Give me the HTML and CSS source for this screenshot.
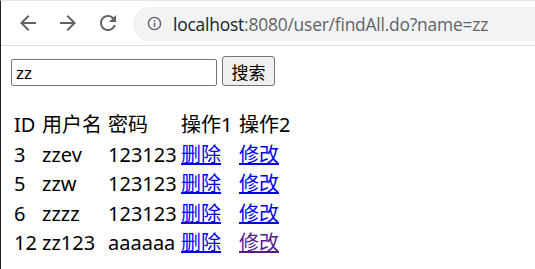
FILE: index.html
```html
<!DOCTYPE html>
<html lang="zh-CN">
<head>
  <meta charset="UTF-8">
  <link rel="stylesheet" href="styles.css">
  <title>用户列表</title>
</head>
<body>
  <div class="window">
    <div class="toolbar">
      <div class="nav-buttons">
        <svg class="nav-icon" viewBox="0 0 24 24"><path d="M20 11H7.83l5.59-5.59L12 4l-8 8 8 8 1.41-1.41L7.83 13H20v-2z"/></svg>
        <svg class="nav-icon" viewBox="0 0 24 24"><path d="M12 4l-1.41 1.41L16.17 11H4v2h12.17l-5.58 5.59L12 20l8-8z"/></svg>
        <svg class="nav-icon" viewBox="0 0 24 24"><path d="M17.65 6.35A7.958 7.958 0 0 0 12 4c-4.42 0-7.990 3.58-7.99 8s3.570 8 7.99 8c3.73 0 6.84-2.55 7.73-6h-2.08A5.99 5.99 0 0 1 12 18c-3.31 0-6-2.690-6-6s2.69-6 6-6c1.66 0 3.14.69 4.22 1.78L13 11h7V4l-2.35 2.35z"/></svg>
      </div>
      <div class="omnibox">
        <svg class="info-icon" viewBox="0 0 16 16">
          <circle cx="8" cy="8" r="6.5" fill="none" stroke="#5f6368" stroke-width="1.5"/>
          <rect x="7.2" y="7" width="1.6" height="4.5" fill="#5f6368"/>
          <rect x="7.2" y="4.3" width="1.6" height="1.6" fill="#5f6368"/>
        </svg>
        <span class="url"><span class="host">localhost</span>:8080/user/findAll.do?name=zz</span>
      </div>
    </div>

    <div class="page">
      <form class="search-form">
        <input class="search-input" value="zz">
        <button type="button" class="search-button">搜索</button>
      </form>

      <table class="user-table">
        <tr>
          <td class="col-id">ID</td>
          <td class="col-name">用户名</td>
          <td class="col-pass">密码</td>
          <td class="col-op1">操作1</td>
          <td>操作2</td>
        </tr>
        <tr>
          <td>3</td>
          <td>zzev</td>
          <td>123123</td>
          <td><a href="#">删除</a></td>
          <td><a href="#">修改</a></td>
        </tr>
        <tr>
          <td>5</td>
          <td>zzw</td>
          <td>123123</td>
          <td><a href="#">删除</a></td>
          <td><a href="#">修改</a></td>
        </tr>
        <tr>
          <td>6</td>
          <td>zzzz</td>
          <td>123123</td>
          <td><a href="#">删除</a></td>
          <td><a href="#">修改</a></td>
        </tr>
        <tr>
          <td>12</td>
          <td>zz123</td>
          <td>aaaaaa</td>
          <td><a href="#">删除</a></td>
          <td><a href="#" class="visited">修改</a></td>
        </tr>
      </table>
    </div>
  </div>
</body>
</html>
```

FILE: styles.css
```css
body {
  margin: 0;
  background-color: white;
  font-family: "Noto Sans", "Noto Sans CJK SC", sans-serif;
}

.window {
  height: 269px;
  border-left: 1px solid #202124;
  border-top: 1px solid #e4e6e9;
  box-sizing: border-box;
  overflow: hidden;
}

.toolbar {
  height: 44px;
  display: flex;
  align-items: center;
  border-bottom: 1px solid #dadce0;
}

.nav-buttons {
  display: flex;
  gap: 16px;
  padding-left: 15px;
  padding-right: 13px;
}

.nav-icon {
  width: 24px;
  height: 24px;
  fill: #5f6368;
}

.omnibox {
  flex: 1;
  height: 34px;
  margin-top: 1px;
  background-color: #f1f3f4;
  border-radius: 17px 0 0 17px;
  display: flex;
  align-items: center;
  padding-left: 14px;
}

.info-icon {
  width: 15px;
  height: 15px;
  margin-right: 11px;
}

.url {
  font-family: "Open Sans", "Noto Sans", sans-serif;
  font-size: 17.4px;
  color: #5f6368;
  letter-spacing: -0.2px;
  white-space: nowrap;
}

.host {
  color: #202124;
}

.page {
  padding: 10px;
}

.search-form {
  display: flex;
  align-items: flex-end;
  gap: 5px;
  margin: 0;
}

.search-input {
  width: 206px;
  height: 27px;
  box-sizing: border-box;
  border: 1px solid #767676;
  border-radius: 2px;
  padding: 0 4px;
  font-family: "Noto Sans", "Noto Sans CJK SC", sans-serif;
  font-size: 17px;
  color: black;
}

.search-button {
  width: 53px;
  height: 30px;
  box-sizing: border-box;
  border: 1px solid #767676;
  border-radius: 3px;
  background-color: #efefef;
  font-family: "Noto Sans CJK SC", sans-serif;
  font-size: 17px;
  color: black;
  padding: 0;
}

.user-table {
  margin-top: 23px;
  margin-left: 0;
  border-spacing: 2px;
  font-size: 20px;
  line-height: 27.5px;
}

.user-table td {
  padding: 0 1px;
  white-space: nowrap;
}

.col-id {
  width: 24px;
}

.col-name {
  width: 62px;
}

.col-pass {
  width: 69px;
}

.col-op1 {
  width: 54px;
}

.user-table a {
  color: #0000ee;
}

.user-table a.visited {
  color: #551a8b;
}
```
